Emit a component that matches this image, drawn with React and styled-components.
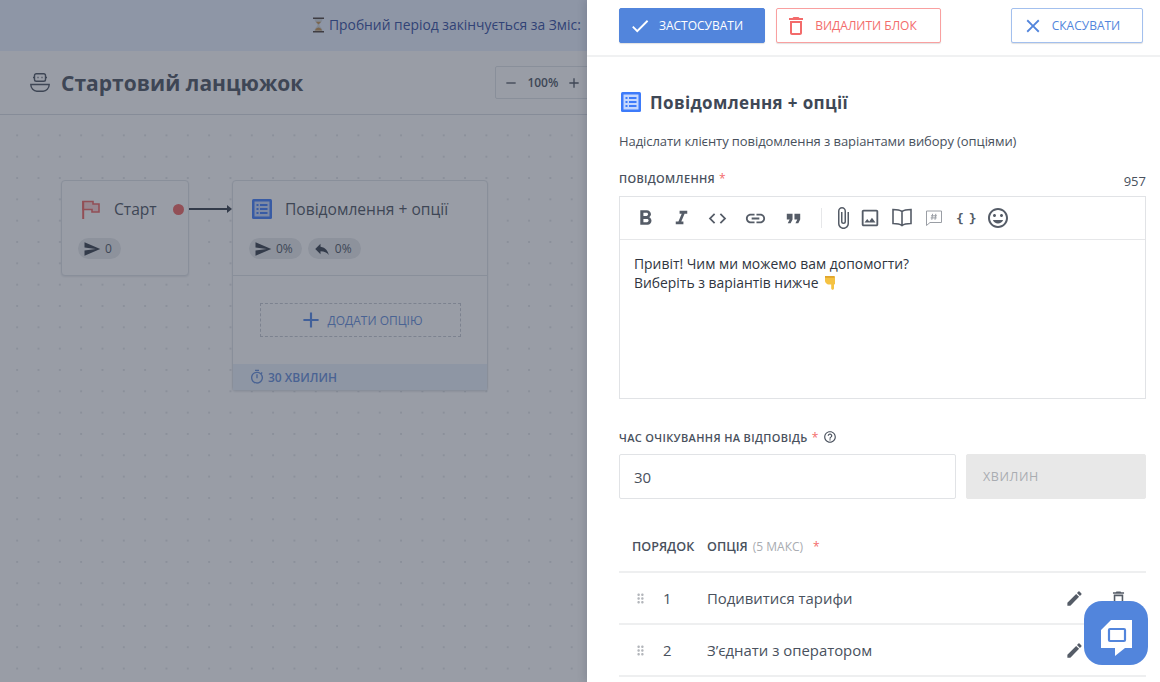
import React from 'react'
import styled, { createGlobalStyle } from 'styled-components'
import {
  MdCheck, MdClose, MdDeleteOutline, MdFormatBold, MdFormatItalic, MdCode, MdLink,
  MdFormatQuote, MdAttachFile, MdOutlineImage, MdTagFaces, MdEdit, MdDragIndicator,
  MdAdd, MdRemove, MdOutlineTimer, MdSend, MdReply, MdOutlineHelpOutline,
} from 'react-icons/md'

const Global = createGlobalStyle`
  html, body { margin: 0; padding: 0; height: 100%; overflow: hidden; }
  body { font-family: "Open Sans", "Noto Sans", sans-serif; color: #3c4350; background: #fff; }
  * { box-sizing: border-box; }
`

const Page = styled.div`
  position: relative;
  width: 1160px;
  height: 682px;
  overflow: hidden;
`
const Workspace = styled.div`
  height: 100%;
  display: flex;
  flex-direction: column;
`
const Banner = styled.div`
  height: 51px;
  flex: none;
  display: flex;
  align-items: center;
  padding: 0 0 2px 313px;
  gap: 5px;
  background: #e9f0fe;
  color: #2f4a9e;
  font-size: 13.85px;
  white-space: nowrap;
`
const ChainHeader = styled.div`
  height: 64px;
  flex: none;
  display: flex;
  align-items: center;
  padding-left: 30px;
  background: #fff;
  border-bottom: 1px solid #d9dde3;
`
const ChainTitle = styled.h1`
  margin: 0 0 0 11px;
  font-size: 21px;
  font-weight: 700;
  letter-spacing: 0.03px;
  color: #49515d;
`
const Zoom = styled.div`
  margin-left: 192px;
  width: 130px;
  height: 33px;
  display: flex;
  align-items: center;
  gap: 8px;
  padding-left: 7px;
  font-size: 12px;
  font-weight: 600;
  color: #49515d;
  border: 1px solid #dfe2e6;
  border-radius: 2px;
`
const Canvas = styled.div`
  position: relative;
  flex: 1;
  background-color: #fff;
  background-image: radial-gradient(#e2e4e7 1.1px, transparent 1.3px);
  background-size: 21.33px 21.33px;
  background-position: 6.5px 9.7px;
`
const Node = styled.div`
  position: absolute;
  left: ${p => p.$x}px;
  top: ${p => p.$y}px;
  width: ${p => p.$w}px;
  background: #fff;
  border: 1px solid #dfe2e6;
  border-radius: 4px;
  box-shadow: 0 1px 2px rgba(40, 50, 70, .12);
`
const NodeHead = styled.div`
  display: flex;
  align-items: center;
  height: 57px;
  padding: 0 0 1px ${p => p.$pad}px;
  font-size: 15.6px;
  font-weight: 500;
  color: #49515d;
  gap: ${p => p.$gap}px;
`
const Port = styled.span`
  width: 11px;
  height: 11px;
  border-radius: 50%;
  background: #f0625f;
  margin-left: 2px;
`
const Stats = styled.div`
  display: flex;
  gap: 6px;
  padding: 0 0 16px 16px;
`
const Stat = styled.span`
  height: 21px;
  padding: 0 9px 0 5px;
  display: inline-flex;
  align-items: center;
  gap: 4px;
  font-size: 12px;
  color: #49515d;
  background: #e6e8eb;
  border-radius: 11px;
  svg { color: #333b47; }
`
const NodeBody = styled.div`
  border-top: 1px solid #dfe2e6;
  padding: 27px 26px 27px 27px;
`
const AddOption = styled.div`
  height: 34px;
  display: flex;
  align-items: center;
  justify-content: center;
  gap: 3px;
  border: 1px dashed #c4c9d0;
  font-size: 12px;
  font-weight: 500;
  color: #5f8ad8;
  text-transform: uppercase;
  svg { color: #4f85e6; }
`
const NodeFoot = styled.div`
  height: 26px;
  display: flex;
  align-items: center;
  gap: 3px;
  padding-left: 16px;
  background: #e9f0fa;
  font-size: 12px;
  font-weight: 600;
  color: #5f8ad8;
  text-transform: uppercase;
`
const Arrow = styled.svg`
  position: absolute;
  left: 188px;
  top: 89px;
`
const Dim = styled.div`
  position: absolute;
  inset: 0;
  background: rgba(52, 60, 78, .5);
`
const Drawer = styled.aside`
  position: absolute;
  top: 0;
  right: 0;
  bottom: 0;
  width: 573px;
  background: #fff;
  box-shadow: -2px 0 8px rgba(30, 40, 60, .16);
`
const ActionBar = styled.div`
  height: 57px;
  display: flex;
  align-items: flex-start;
  padding: 8px 17px 0 32px;
  border-bottom: 2px solid #f0f1f2;
`
const Button = styled.button`
  height: 35px;
  width: ${p => p.$w}px;
  margin-right: ${p => p.$mr || 0}px;
  margin-left: ${p => (p.$push ? 'auto' : 0)};
  display: flex;
  align-items: center;
  justify-content: center;
  gap: ${p => p.$gap}px;
  padding: 0 ${p => p.$pr}px 0 0;
  font: 500 12px "Open Sans", sans-serif;
  text-transform: uppercase;
  color: ${p => p.$color};
  background: ${p => p.$bg || '#fff'};
  border: 1px solid ${p => p.$border};
  border-radius: 2px;
  box-shadow: 0 1px 1px rgba(0, 0, 0, .12);
`
const Content = styled.div`
  padding: 0 14px 0 32px;
`
const Title = styled.h2`
  margin: 32px 0 0;
  height: 26px;
  display: flex;
  align-items: center;
  gap: 9px;
  font-size: 17px;
  font-weight: 700;
  color: #3f4856;
  letter-spacing: .35px;
  padding-left: 2px;
`
const Description = styled.p`
  margin: 17px 0 0;
  font-size: 13px;
  line-height: 18px;
  letter-spacing: -.08px;
  color: #49515d;
`
const LabelRow = styled.div`
  display: flex;
  align-items: center;
  justify-content: space-between;
  margin-top: ${p => p.$mt}px;
  height: 18px;
`
const Label = styled.label`
  display: flex;
  align-items: center;
  font-size: 11px;
  font-weight: 600;
  letter-spacing: .35px;
  color: #49515d;
  text-transform: uppercase;
`
const Req = styled.span`
  color: #f36b6b;
  margin-left: ${p => p.$ml || 4}px;
  font-weight: 400;
  font-size: 12px;
`
const Help = styled(MdOutlineHelpOutline)`
  margin-left: 4px;
`
const Counter = styled.span`
  font-size: 13px;
  color: #49515d;
  padding-top: 5px;
`
const Editor = styled.div`
  margin-top: 9px;
  height: 203px;
  border: 1px solid #e1e3e6;
`
const EditorTools = styled.div`
  height: 43px;
  display: flex;
  align-items: center;
  padding-left: 13px;
  border-bottom: 1px solid #e6e7e9;
  color: #555c67;
`
const Tool = styled.span`
  width: ${p => p.$w || 37}px;
  flex: none;
  display: flex;
  align-items: center;
  color: ${p => p.$c || '#555c67'};
`
const ClipIcon = styled(MdAttachFile)`
  margin-left: -3px;
`
const ToolSep = styled.span`
  width: 1px;
  height: 20px;
  background: #e6e7e9;
  margin: 0 12px 0 -1px;
`
const Braces = styled.span`
  font-family: "DejaVu Sans Mono", monospace;
  font-size: 13px;
  font-weight: 700;
  letter-spacing: 5px;
  white-space: nowrap;
`
const EditorText = styled.div`
  padding: 14px 14px;
  font-size: 13.9px;
  line-height: 19px;
  color: #2f3540;
  svg { vertical-align: -2px; margin-left: 2px; }
`
const WaitRow = styled.div`
  display: grid;
  grid-template-columns: 337px 180px;
  gap: 10px;
  margin-top: 8px;
`
const Input = styled.div`
  height: 45px;
  display: flex;
  align-items: center;
  padding-left: ${p => p.$pad}px;
  border: 1px solid ${p => (p.$off ? '#e8e8e8' : '#e1e3e6')};
  border-radius: 2px;
  background: ${p => (p.$off ? '#e8e8e8' : '#fff')};
  color: ${p => (p.$off ? '#a9acb1' : '#49515d')};
  font-size: ${p => (p.$off ? 12.5 : 15)}px;
  letter-spacing: ${p => (p.$off ? '.6px' : 0)};
`
const Grid = styled.div`
  display: grid;
  grid-template-columns: 88px 1fr 44px 37px;
  align-items: center;
`
const TableHead = styled(Grid)`
  height: 52px;
  margin-top: 22px;
  border-bottom: 2px solid #eeeff0;
  font-size: 12.6px;
  font-weight: 600;
  color: #49515d;
  text-transform: uppercase;
`
const OrderHead = styled.span`
  padding-left: 13px;
  white-space: nowrap;
`
const Muted = styled.span`
  color: #a9acb1;
  font-weight: 400;
  font-size: 12px;
  margin-left: 5px;
`
const Row = styled(Grid)`
  height: 52px;
  border-bottom: 2px solid #eeeff0;
  font-size: 14.9px;
  color: #49515d;
  svg { display: block; }
`
const Order = styled.span`
  display: flex;
  align-items: center;
  gap: 15px;
  padding-left: 14px;
  svg { color: #b3b6bb; }
`
const ChatButton = styled.div`
  position: absolute;
  left: 1084px;
  top: 601px;
  width: 64px;
  height: 64px;
  display: flex;
  align-items: center;
  justify-content: center;
  padding-top: 10px;
  border-radius: 18px;
  background: #5285dc;
`

const BotIcon = () => (
  <svg width="20" height="20" viewBox="0 0 20 20" fill="none" stroke="#49515d" strokeWidth="1.4">
    <rect x="4.500" y=".8" width="11" height="7.400" rx="1.800" />
    <path d="M3 4.500h1.500M15.500 4.500H17" />
    <path d="M7.500 4.500h1M11.500 4.500h1" />
    <path d="M.8 11.500h18.400c0 4-3 6.700-6 6.700H6.800c-3 0-6-2.700-6-6.700z" />
  </svg>
)
const FlagIcon = () => (
  <svg width="18" height="19" viewBox="0 0 18 19">
    <path d="M1 1.500h10V4h6v8h-7V9.500H1z" fill="#fbd3d2" stroke="#f0625f" strokeWidth="1.600" />
    <path d="M1.200 1v18" stroke="#f0625f" strokeWidth="2" />
  </svg>
)
const ListIcon = ({ size }) => (
  <svg width={size} height={size} viewBox="0 0 20 20">
    <rect width="20" height="20" rx="1.500" fill="#3d7bfa" />
    <rect x="2.500" y="2.500" width="15" height="15" fill="#c6d8fd" />
    <path d="M4.500 5h2v2h-2zM8 5h7.500v2H8zM4.500 9h2v2h-2zM8 9h7.500v2H8zM4.500 13h2v2h-2zM8 13h7.500v2H8z" fill="#3d7bfa" />
  </svg>
)
const Hourglass = () => (
  <svg width="11" height="16" viewBox="0 0 11 16">
    <path d="M0 .5h11v1.600H0zM0 13.900h11v1.600H0z" fill="#4a3e38" />
    <path d="M1.500 2.100h8c0 3-3 4.400-3 5.900s3 2.900 3 5.900h-8c0-3 3-4.400 3-5.900s-3-2.900-3-5.900z" fill="#cfd6dc" />
    <path d="M2.800 4.800h5.400L5.500 7.600zM2 13.600c.4-1.800 2.500-3 3.500-3s3.100 1.200 3.500 3z" fill="#c2914f" />
  </svg>
)
const PointDown = () => (
  <svg width="12" height="15" viewBox="0 0 12 15">
    <path d="M1 1h8.500c.9 0 1.500.6 1.500 1.500V8.500c0 .6-.4 1-1 1v3.800c0 .8-.6 1.500-1.400 1.500S7.200 14.100 7.200 13.300V9.500H4.500C3 9.500 1 7.500 1 6z" fill="#f5c242" />
    <path d="M1 1h9.500v1.800H1z" fill="#e0a52e" />
  </svg>
)
const BookIcon = () => (
  <svg width="22" height="22" viewBox="0 0 22 22" fill="none" stroke="currentColor" strokeWidth="1.600">
    <path d="M11 4.500C9 3 6 2.500 2 2.500v14c4 0 7 .5 9 2 2-1.500 5-2 9-2v-14c-4 0-7 .5-9 2zM11 4.500v14" />
  </svg>
)
const HashNote = () => (
  <svg width="20" height="20" viewBox="0 0 20 20" fill="none" stroke="#9a9ea5" strokeWidth="1">
    <path d="M2.500 3h15v11.500H6l-3.500 3z" />
    <path d="M8.600 5.800l-.8 6M11.800 5.800l-.8 6M7 7.800h6M6.700 9.900h6" />
  </svg>
)
const ChatIcon = () => (
  <svg width="31" height="36" viewBox="0 0 31 36">
    <path d="M10 0h21v28h-7l-10 8v-8H0V10z" fill="#fff" />
    <rect x="8" y="9" width="16" height="12" rx="1" fill="none" stroke="#5285dc" strokeWidth="2.200" />
  </svg>
)

const tools = [
  [<MdFormatBold size={25} />, 37],
  [<MdFormatItalic size={23} />, 37],
  [<MdCode size={21} />, 37],
  [<MdLink size={23} />, 38],
  [<MdFormatQuote size={23} />, 40],
]
const tools2 = [
  [<ClipIcon size={24} />, 25],
  [<MdOutlineImage size={22} />, 32],
  [<BookIcon />, 33],
  [<HashNote />, 32, '#9a9ea5'],
  [<Braces>{'{}'}</Braces>, 30],
  [<MdTagFaces size={24} />, 30],
]
const options = ['Подивитися тарифи', 'З’єднати з оператором']

const App = () => (
  <Page>
    <Global />
    <Workspace>
      <Banner>
        <Hourglass />
        Пробний період закінчується за Зміс:
      </Banner>
      <ChainHeader>
        <BotIcon />
        <ChainTitle>Стартовий ланцюжок</ChainTitle>
        <Zoom>
          <MdRemove size={16} />100%<MdAdd size={16} />
        </Zoom>
      </ChainHeader>
      <Canvas>
        <Node $x={61} $y={65} $w={128}>
          <NodeHead $pad={20} $gap={14}>
            <FlagIcon />
            Старт
            <Port />
          </NodeHead>
          <Stats>
            <Stat><MdSend size={18} />0</Stat>
          </Stats>
        </Node>
        <Arrow width="46" height="10" viewBox="0 0 46 10">
          <path d="M1 5h40" stroke="#333b47" strokeWidth="2" />
          <path d="M39 1l5 4-5 4z" fill="#333b47" />
        </Arrow>
        <Node $x={232} $y={65} $w={256}>
          <NodeHead $pad={19} $gap={13}>
            <ListIcon size={20} />
            Повідомлення + опції
          </NodeHead>
          <Stats>
            <Stat><MdSend size={18} />0%</Stat>
            <Stat><MdReply size={18} />0%</Stat>
          </Stats>
          <NodeBody>
            <AddOption><MdAdd size={26} />Додати опцію</AddOption>
          </NodeBody>
          <NodeFoot><MdOutlineTimer size={16} />30 хвилин</NodeFoot>
        </Node>
      </Canvas>
    </Workspace>
    <Dim />
    <Drawer>
      <ActionBar>
        <Button $w={146} $mr={11} $bg="#5285dc" $border="#5285dc" $color="#fff" $gap={8} $pr={12}>
          <MdCheck size={22} />Застосувати
        </Button>
        <Button $w={165} $border="#f9a0a0" $color="#f36b6b" $gap={7} $pr={16}>
          <MdDeleteOutline size={24} />Видалити блок
        </Button>
        <Button $w={132} $push $border="#a3c0ee" $color="#5285dc" $gap={8} $pr={12}>
          <MdClose size={22} />Скасувати
        </Button>
      </ActionBar>
      <Content>
        <Title><ListIcon size={20} />Повідомлення + опції</Title>
        <Description>Надіслати клієнту повідомлення з варіантами вибору (опціями)</Description>
        <LabelRow $mt={19}>
          <Label>Повідомлення<Req>*</Req></Label>
          <Counter>957</Counter>
        </LabelRow>
        <Editor>
          <EditorTools>
            {tools.map(([icon, w], i) => <Tool key={i} $w={w}>{icon}</Tool>)}
            <ToolSep />
            {tools2.map(([icon, w, c], i) => <Tool key={i} $w={w} $c={c}>{icon}</Tool>)}
          </EditorTools>
          <EditorText>
            Привіт! Чим ми можемо вам допомогти?<br />
            Виберіть з варіантів нижче <PointDown />
          </EditorText>
        </Editor>
        <LabelRow $mt={29}>
          <Label>
            Час очікування на відповідь<Req>*</Req>
            <Help size={14} />
          </Label>
        </LabelRow>
        <WaitRow>
          <Input $pad={14}>30</Input>
          <Input $pad={16} $off>ХВИЛИН</Input>
        </WaitRow>
        <TableHead>
          <OrderHead>Порядок</OrderHead>
          <span>Опція<Muted>(5 макс)</Muted><Req $ml={10}>*</Req></span>
        </TableHead>
        {options.map((text, i) => (
          <Row key={text}>
            <Order><MdDragIndicator size={15} />{i + 1}</Order>
            <span>{text}</span>
            <MdEdit size={19} color="#555c67" />
            <MdDeleteOutline size={19} color="#555c67" />
          </Row>
        ))}
      </Content>
    </Drawer>
    <ChatButton><ChatIcon /></ChatButton>
  </Page>
)

export default App
